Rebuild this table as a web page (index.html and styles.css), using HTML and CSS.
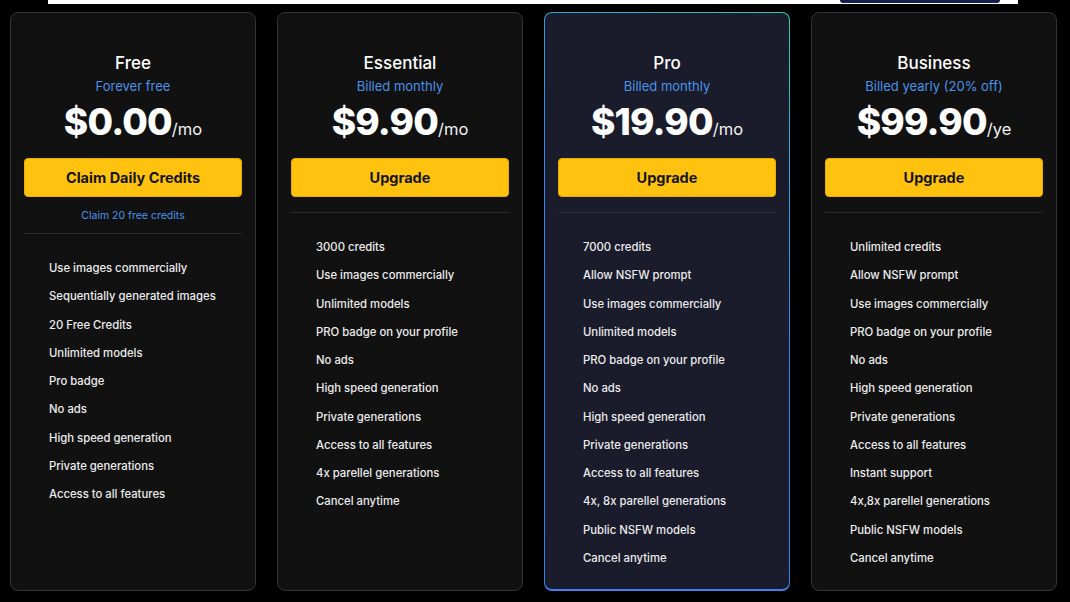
FILE: index.html
```html
<!DOCTYPE html>
<html lang="en">
<head>
<meta charset="utf-8">
<title>Pricing</title>
<link rel="stylesheet" href="styles.css">
</head>
<body>
<div class="topbar"><div class="pill"></div></div>
<main class="plans">
  <section class="card">
    <h2 class="title">Free</h2>
    <p class="sub">Forever free</p>
    <p class="price"><span class="amount">$0.00</span><span class="per">/mo</span></p>
    <button class="btn">Claim Daily Credits</button>
    <p class="note">Claim 20 free credits</p>
    <hr class="divider">
    <ul class="features">
      <li>Use images commercially</li>
      <li>Sequentially generated images</li>
      <li>20 Free Credits</li>
      <li>Unlimited models</li>
      <li>Pro badge</li>
      <li>No ads</li>
      <li>High speed generation</li>
      <li>Private generations</li>
      <li>Access to all features</li>
    </ul>
  </section>
  <section class="card">
    <h2 class="title">Essential</h2>
    <p class="sub">Billed monthly</p>
    <p class="price"><span class="amount">$9.90</span><span class="per">/mo</span></p>
    <button class="btn">Upgrade</button>
    <hr class="divider">
    <ul class="features">
      <li>3000 credits</li>
      <li>Use images commercially</li>
      <li>Unlimited models</li>
      <li>PRO badge on your profile</li>
      <li>No ads</li>
      <li>High speed generation</li>
      <li>Private generations</li>
      <li>Access to all features</li>
      <li>4x parellel generations</li>
      <li>Cancel anytime</li>
    </ul>
  </section>
  <section class="card card-pro">
    <h2 class="title">Pro</h2>
    <p class="sub">Billed monthly</p>
    <p class="price"><span class="amount">$19.90</span><span class="per">/mo</span></p>
    <button class="btn">Upgrade</button>
    <hr class="divider">
    <ul class="features">
      <li>7000 credits</li>
      <li>Allow NSFW prompt</li>
      <li>Use images commercially</li>
      <li>Unlimited models</li>
      <li>PRO badge on your profile</li>
      <li>No ads</li>
      <li>High speed generation</li>
      <li>Private generations</li>
      <li>Access to all features</li>
      <li>4x, 8x parellel generations</li>
      <li>Public NSFW models</li>
      <li>Cancel anytime</li>
    </ul>
  </section>
  <section class="card">
    <h2 class="title">Business</h2>
    <p class="sub">Billed yearly (20% off)</p>
    <p class="price"><span class="amount">$99.90</span><span class="per">/ye</span></p>
    <button class="btn">Upgrade</button>
    <hr class="divider">
    <ul class="features">
      <li>Unlimited credits</li>
      <li>Allow NSFW prompt</li>
      <li>Use images commercially</li>
      <li>PRO badge on your profile</li>
      <li>No ads</li>
      <li>High speed generation</li>
      <li>Private generations</li>
      <li>Access to all features</li>
      <li>Instant support</li>
      <li>4x,8x parellel generations</li>
      <li>Public NSFW models</li>
      <li>Cancel anytime</li>
    </ul>
  </section>
</main>
</body>
</html>
```

FILE: styles.css
```css
* { box-sizing: border-box; }

html, body {
  margin: 0;
  padding: 0;
  background: #000;
  height: 602px;
  overflow: hidden;
}

body {
  font-family: Inter, "Noto Sans", "DejaVu Sans", sans-serif;
  color: #fff;
}

.topbar {
  margin: 0 52px 0 48px;
  height: 4px;
  background: #fff;
  display: flex;
  justify-content: flex-end;
  padding-right: 18px;
}

.pill {
  width: 160px;
  height: 3px;
  background: #13204f;
  border-radius: 0 0 60px 60px;
}

.plans {
  display: flex;
  gap: 21px;
  padding: 8px 13px 0 10px;
  height: 587px;
}

.card {
  width: 246px;
  flex: none;
  background: #111112;
  border: 1px solid #343434;
  border-radius: 8px;
  padding: 39px 13px 16px;
  display: flex;
  flex-direction: column;
  align-items: stretch;
}

.card-pro {
  border: 1px solid transparent;
  border-bottom-width: 2px;
  background:
    linear-gradient(#1a1b2b, #1a1b2b) padding-box,
    linear-gradient(35deg, #3b7ff0 0%, #3d86ec 60%, #2cc9ad 100%) border-box;
}

.title {
  margin: 0;
  font-size: 17px;
  line-height: 22px;
  font-weight: 500;
  text-align: center;
  color: #fff;
}

.sub {
  margin: 3px 0 0;
  font-size: 13px;
  line-height: 18px;
  font-weight: 400;
  text-align: center;
  color: #4b93ea;
}

.price {
  margin: 4px 0 0;
  display: flex;
  justify-content: center;
  align-items: baseline;
  white-space: nowrap;
}

.amount {
  font-size: 37px;
  line-height: 46px;
  font-weight: 800;
  letter-spacing: -0.8px;
  color: #fff;
}

.per {
  font-size: 16.5px;
  line-height: 1;
  font-weight: 400;
  color: #f2f2f2;
}

.btn {
  margin-top: 13px;
  height: 39px;
  width: 100%;
  flex: none;
  border: 1px solid #e8ad00;
  border-radius: 4px;
  background: #ffc20e;
  color: #151515;
  font-family: inherit;
  font-size: 14.5px;
  font-weight: 700;
  cursor: pointer;
}

.note {
  margin: 12px 0 0;
  font-size: 10.5px;
  line-height: 14px;
  text-align: center;
  color: #4b93ea;
}

.divider {
  margin: 15px 0 0;
  border: 0;
  height: 1px;
  flex: none;
  background: #2a2a2c;
}

.note + .divider { margin-top: 10px; }

.card-pro .divider { background: #2b2c3c; }

.features {
  list-style: none;
  margin: 0;
  padding: 20px 0 0 25px;
}

.features li {
  font-size: 11.3px;
  line-height: 28.25px;
  font-weight: 500;
  color: #ececec;
  white-space: nowrap;
}
```
